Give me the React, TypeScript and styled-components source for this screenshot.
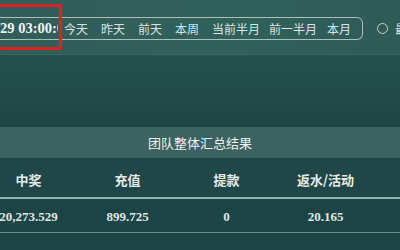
import React from 'react';
import styled, { createGlobalStyle } from 'styled-components';

const GlobalStyle = createGlobalStyle`
  html, body {
    margin: 0;
    padding: 0;
    width: 400px;
    height: 250px;
    overflow: hidden;
    background: #1e4545;
  }
  #root {
    width: 400px;
    height: 250px;
  }
`;

const Page = styled.div`
  position: relative;
  width: 400px;
  height: 250px;
  overflow: hidden;
  font-family: 'Liberation Serif', 'Noto Sans CJK SC', serif;
  background: linear-gradient(180deg, #2a5652 0px, #224c4a 90px, #1e4545 130px);
`;

const Toolbar = styled.div`
  height: 55px;
  box-sizing: border-box;
  padding-top: 17px;
  display: flex;
  align-items: flex-start;
  background: linear-gradient(90deg, #325d59 0%, #31605b 60%, #2f5b57 100%);
  border-bottom: 1px solid #3b6662;
`;

const RangeBox = styled.div`
  flex-shrink: 0;
  display: flex;
  align-items: center;
  height: 23px;
  width: 363px;
  box-sizing: border-box;
  border: 1px solid #a7bebb;
  border-left: none;
  border-radius: 0 6px 6px 0;
`;

const DateText = styled.div`
  flex-shrink: 0;
  width: 58px;
  overflow: hidden;
  white-space: nowrap;
  color: #f2f4f4;
  font-weight: 700;
  font-size: 14.5px;
  line-height: 21px;
`;

const Quick = styled.span<{ $gap: number }>`
  font-family: 'Noto Sans CJK SC', sans-serif;
  font-size: 12px;
  line-height: 21px;
  color: #dde3e2;
  margin-left: ${(p) => p.$gap}px;
  white-space: nowrap;
`;

const RadioWrap = styled.div`
  flex-shrink: 0;
  display: flex;
  align-items: center;
  height: 23px;
  margin-left: 14px;
  gap: 7px;
`;

const Radio = styled.span`
  width: 9px;
  height: 9px;
  border-radius: 50%;
  border: 1px solid #c9d3d2;
`;

const RadioLabel = styled.span`
  font-family: 'Noto Sans CJK SC', sans-serif;
  font-size: 12px;
  color: #dde3e2;
  white-space: nowrap;
`;

const Highlight = styled.div`
  position: absolute;
  left: -4px;
  top: 4px;
  width: 66px;
  height: 46px;
  box-sizing: border-box;
  border: 3px solid #dc2229;
`;

const TitleBand = styled.div`
  margin-top: 72px;
  height: 31px;
  display: flex;
  align-items: center;
  justify-content: center;
  background: #3d6360;
  color: #eef2f1;
  font-family: 'Noto Sans CJK SC', sans-serif;
  font-size: 13px;
`;

const Grid = styled.div`
  display: grid;
  grid-template-columns: repeat(6, 99px);
  margin-left: -120px;
`;

const HeadCell = styled.div`
  height: 41px;
  padding-top: 3px;
  box-sizing: border-box;
  display: flex;
  align-items: center;
  justify-content: center;
  color: #e6ecea;
  font-family: 'Noto Sans CJK SC', sans-serif;
  font-size: 13px;
  font-weight: 700;
  border-bottom: 2px solid #8fb3ae;
  background: #1f4747;
`;

const DataCell = styled.div`
  height: 34px;
  padding-top: 2px;
  box-sizing: border-box;
  display: flex;
  align-items: center;
  justify-content: center;
  color: #dfe6e5;
  font-size: 13px;
  font-weight: 700;
  border-bottom: 1px solid #6a908b;
  background: #1d4444;
`;

const heads = ['投注', '中奖', '充值', '提款', '返水/活动', '手续费'];
const values = ['26,112.000', '20,273.529', '899.725', '0', '20.165', '0'];

export default function App() {
  return (
    <>
      <GlobalStyle />
      <Page>
        <Toolbar>
          <RangeBox>
            <DateText>29 03:00:00</DateText>
            <Quick $gap={6}>今天</Quick>
            <Quick $gap={13}>昨天</Quick>
            <Quick $gap={13}>前天</Quick>
            <Quick $gap={13}>本周</Quick>
            <Quick $gap={13}>当前半月</Quick>
            <Quick $gap={9}>前一半月</Quick>
            <Quick $gap={10}>本月</Quick>
          </RangeBox>
          <RadioWrap>
            <Radio />
            <RadioLabel>最近</RadioLabel>
          </RadioWrap>
        </Toolbar>
        <Highlight />
        <TitleBand>团队整体汇总结果</TitleBand>
        <Grid>
          {heads.map((h) => (
            <HeadCell key={h}>{h}</HeadCell>
          ))}
          {values.map((v, i) => (
            <DataCell key={i}>{v}</DataCell>
          ))}
        </Grid>
      </Page>
    </>
  );
}
